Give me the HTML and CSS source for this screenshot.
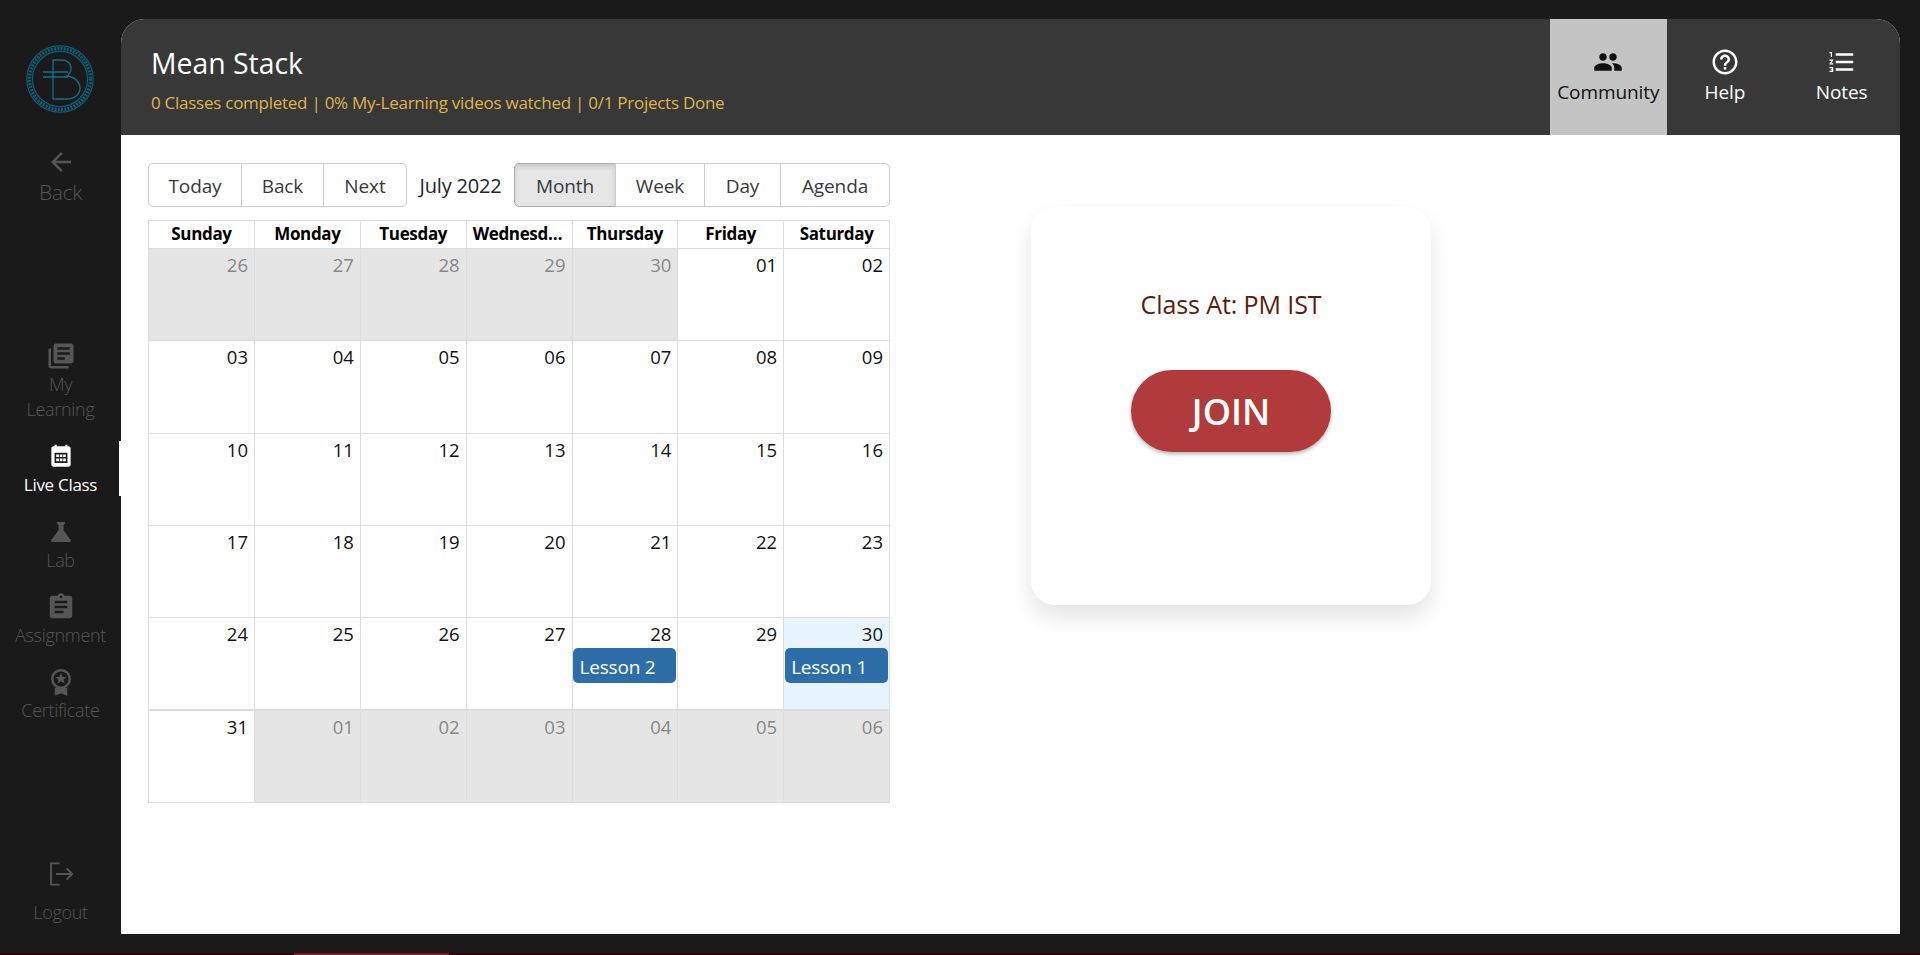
FILE: index.html
```html
<!DOCTYPE html>
<html lang="en">
<head>
  <meta charset="UTF-8" />
  <meta name="viewport" content="width=device-width, initial-scale=1.0" />
  <title>Mean Stack - Live Class</title>
  <link rel="stylesheet" href="styles.css">
</head>
<body>
  <div class="app">
    <aside class="sidebar">
      <svg class="logo" viewBox="0 0 68 68" fill="none" stroke="#0d5f78">
        <circle cx="34" cy="34" r="33.2" stroke-width="1.2" />
        <circle cx="34" cy="34" r="30.5" stroke-width="3.4" stroke-dasharray="2 1.2" />
        <circle cx="34" cy="34" r="27.6" stroke-width="1.2" />
        <path stroke="#11708c" stroke-width="1.3" d="M27 54V15h9c6 0 9 4 9 8.500 0 3-1.500 5.500-4 7.500 8 1 13 6.500 13 12 0 6-5 11-13 11H27" />
        <path stroke="#11708c" stroke-width="1.300" d="M17 27h25M17 32h25" />
      </svg>

      <a class="nav-item back">
        <svg viewBox="0 0 24 24"><path d="M20 11H7.830l5.590-5.590L12 4l-8 8 8 8 1.410-1.410L7.830 13H20v-2z" /></svg>
        <span>Back</span>
      </a>

      <nav class="nav-list">
        <a class="nav-item">
          <svg viewBox="0 0 24 24"><path d="M4 6H2v14c0 1.100.9 2 2 2h14v-2H4V6zm16-4H8c-1.100 0-2 .9-2 2v12c0 1.100.9 2 2 2h12c1.100 0 2-.9 2-2V4c0-1.100-.9-2-2-2zm-1 9H9V9h10v2zm-4 4H9v-2h6v2zm4-8H9V5h10v2z" /></svg>
          <span>My<br>Learning</span>
        </a>
        <a class="nav-item active">
          <svg viewBox="-2 -2 28 28">
            <path d="M19 3h-1V1.500h-2V3H8V1.500H6V3H5C3.900 3 3 3.900 3 5v15c0 1.100.9 2 2 2h14c1.100 0 2-.9 2-2V5c0-1.100-.9-2-2-2z" />
            <path class="cut" d="M6 9h12v9.500H6z" />
            <path d="M7.500 10.500h2.500V13H7.500zM10.800 10.500h2.500V13h-2.500zM14 10.500h2.500V13H14zM7.500 14.300h2.500v2.500H7.500zM10.800 14.300h2.500v2.500h-2.500zM14 14.300h2.500v2.500H14z" />
          </svg>
          <span>Live Class</span>
        </a>
        <a class="nav-item">
          <svg viewBox="0 0 24 24"><path d="M19.800 18.400L14 10.670V6.500l1.350-1.690c.26-.33.03-.81-.39-.81H9.040c-.42 0-.65.48-.39.81L10 6.500v4.170L4.200 18.400c-.49.66-.02 1.600.8 1.600h14c.82 0 1.290-.94.8-1.600z" /></svg>
          <span>Lab</span>
        </a>
        <a class="nav-item">
          <svg viewBox="0 0 24 24"><path d="M19 3h-4.180C14.400 1.840 13.300 1 12 1c-1.300 0-2.400.84-2.820 2H5c-1.100 0-2 .9-2 2v14c0 1.100.9 2 2 2h14c1.100 0 2-.9 2-2V5c0-1.100-.9-2-2-2zm-7 0c.55 0 1 .45 1 1s-.45 1-1 1-1-.45-1-1 .45-1 1-1zm2 14H7v-2h7v2zm3-4H7v-2h10v2zm0-4H7V7h10v2z" /></svg>
          <span>Assignment</span>
        </a>
        <a class="nav-item">
          <svg viewBox="0 0 24 24">
            <path d="M7 16.500V23l5-2 5 2v-6.500z" />
            <circle cx="12" cy="9.500" r="8" />
            <circle class="cut" cx="12" cy="9.500" r="6" />
            <path d="M12 5l1.300 3h3.200l-2.600 2 1 3.200-2.900-1.900-2.900 1.900 1-3.200-2.600-2h3.200z" />
          </svg>
          <span>Certificate</span>
        </a>
      </nav>

      <a class="nav-item logout">
        <svg viewBox="0 0 24 24" fill="none" stroke-width="1.500">
          <path class="line" d="M11 3.500H4v17h7M8 12h13M16.500 7.500L21 12l-4.500 4.500" />
        </svg>
        <span>Logout</span>
      </a>
    </aside>

    <main class="panel">
      <header class="panel-head">
        <div class="course">
          <h1>Mean Stack</h1>
          <p>0 Classes completed | 0% My-Learning videos watched | 0/1 Projects Done</p>
        </div>
        <div class="tabs">
          <a class="tab selected">
            <svg viewBox="0 0 24 24"><path d="M16 11c1.660 0 2.990-1.340 2.990-3S17.660 5 16 5c-1.660 0-3 1.340-3 3s1.340 3 3 3zm-8 0c1.660 0 2.990-1.340 2.990-3S9.660 5 8 5C6.340 5 5 6.340 5 8s1.340 3 3 3zm0 2c-2.330 0-7 1.170-7 3.500V19h14v-2.500c0-2.330-4.670-3.500-7-3.500zm8 0c-.29 0-.62.02-.97.05 1.160.84 1.970 1.970 1.970 3.450V19h6v-2.500c0-2.330-4.670-3.500-7-3.500z" /></svg>
            <span>Community</span>
          </a>
          <a class="tab">
            <svg viewBox="0 0 24 24"><path d="M11 18h2v-2h-2v2zm1-16C6.480 2 2 6.480 2 12s4.480 10 10 10 10-4.480 10-10S17.520 2 12 2zm0 18c-4.410 0-8-3.590-8-8s3.590-8 8-8 8 3.590 8 8-3.590 8-8 8zm0-14c-2.210 0-4 1.790-4 4h2c0-1.100.9-2 2-2s2 .9 2 2c0 2-3 1.750-3 5h2c0-2.250 3-2.500 3-5 0-2.210-1.790-4-4-4z" /></svg>
            <span>Help</span>
          </a>
          <a class="tab">
            <svg viewBox="0 0 24 24"><path d="M2 17h2v.5H3v1h1v.5H2v1h3v-4H2v1zm1-9h1V4H2v1h1v3zm-1 3h1.800L2 13.100v.9h3v-1H3.200L5 10.900V10H2v1zm5-6v2h14V5H7zm0 14h14v-2H7v2zm0-6h14v-2H7v2z" /></svg>
            <span>Notes</span>
          </a>
        </div>
      </header>

      <section class="panel-body">
        <div class="calendar">
          <div class="toolbar">
            <div class="btn-group">
              <button class="w-today">Today</button>
              <button class="w-back">Back</button>
              <button class="w-next">Next</button>
            </div>
            <span class="toolbar-label">July 2022</span>
            <div class="btn-group">
              <button class="w-month on">Month</button>
              <button class="w-week">Week</button>
              <button class="w-day">Day</button>
              <button class="w-agenda">Agenda</button>
            </div>
          </div>

          <div class="grid">
            <div class="head">
              <div>Sunday</div><div>Monday</div><div>Tuesday</div><div>Wednesday</div><div>Thursday</div><div>Friday</div><div>Saturday</div>
            </div>
            <div class="week">
              <div class="off">26</div><div class="off">27</div><div class="off">28</div><div class="off">29</div><div class="off">30</div><div>01</div><div>02</div>
            </div>
            <div class="week">
              <div>03</div><div>04</div><div>05</div><div>06</div><div>07</div><div>08</div><div>09</div>
            </div>
            <div class="week">
              <div>10</div><div>11</div><div>12</div><div>13</div><div>14</div><div>15</div><div>16</div>
            </div>
            <div class="week">
              <div>17</div><div>18</div><div>19</div><div>20</div><div>21</div><div>22</div><div>23</div>
            </div>
            <div class="week">
              <div>24</div><div>25</div><div>26</div><div>27</div>
              <div>28<span class="event">Lesson 2</span></div>
              <div>29</div>
              <div class="today">30<span class="event">Lesson 1</span></div>
            </div>
            <div class="week last">
              <div>31</div><div class="off">01</div><div class="off">02</div><div class="off">03</div><div class="off">04</div><div class="off">05</div><div class="off">06</div>
            </div>
          </div>
        </div>

        <div class="join-card">
          <p>Class At: PM IST</p>
          <button class="join">JOIN</button>
        </div>
      </section>
    </main>
  </div>

  <div class="stripe"><i></i></div>
</body>
</html>
```

FILE: styles.css
```css
* {
  box-sizing: border-box;
}
html, body {
  height: 100%;
}
body {
  margin: 0;
  display: flex;
  flex-direction: column;
  overflow: hidden;
  background: #1a1a1a;
  font-family: 'Open Sans', 'Noto Sans', sans-serif;
  color: #212529;
}
a {
  color: inherit;
}
svg {
  display: block;
  fill: currentColor;
}
.app {
  flex: 1;
  display: flex;
  min-height: 0;
}
.stripe {
  height: 2px;
  padding-left: 294px;
  background: #2a0808;
}
.stripe i {
  display: block;
  width: 155px;
  height: 2px;
  background: #7c1a1a;
}

/* sidebar */
.sidebar {
  width: 121px;
  flex-shrink: 0;
  display: flex;
  flex-direction: column;
  align-items: stretch;
  padding-top: 45px;
  padding-bottom: 28px;
}
.logo {
  width: 68px;
  height: 68px;
  margin: 0 auto 34px 26px;
  fill: none;
}
.nav-item {
  position: relative;
  display: flex;
  flex-direction: column;
  align-items: center;
  gap: 1px;
  color: #565656;
  font-size: 18px;
  font-weight: 300;
  line-height: 25px;
  letter-spacing: -0.3px;
  text-align: center;
}
.nav-item svg {
  width: 30px;
  height: 30px;
}
.nav-list {
  display: flex;
  flex-direction: column;
  gap: 19px;
  margin-top: 136px;
}
.back {
  gap: 3px;
  font-size: 21px;
}
.nav-item.active {
  padding-bottom: 1px;
  color: #fff;
  font-size: 17px;
  font-weight: 400;
}
.nav-item.active::after {
  content: "";
  position: absolute;
  top: 0;
  right: 0;
  width: 2px;
  height: 55px;
  background: #fff;
}
.cut {
  fill: #1a1a1a;
}
.line {
  stroke: currentColor;
  fill: none;
}
.logout {
  margin-top: auto;
  gap: 11px;
}

/* main panel */
.panel {
  flex: 1;
  display: flex;
  flex-direction: column;
  margin: 19px 20px 19px 0;
  background: #fff;
  border-radius: 24px 24px 0 0;
  overflow: hidden;
}
.panel-head {
  height: 116px;
  flex-shrink: 0;
  display: flex;
  justify-content: space-between;
  background: #383838;
}
.course {
  padding: 23px 0 0 30px;
}
.course h1 {
  margin: 0;
  color: #fff;
  font-size: 28.4px;
  font-weight: 400;
  line-height: 42px;
}
.course p {
  margin: 0;
  color: #dcb54a;
  font-size: 17px;
  line-height: 38px;
  letter-spacing: -0.26px;
}
.tabs {
  display: flex;
}
.tab {
  width: 116.7px;
  display: flex;
  flex-direction: column;
  align-items: center;
  padding-top: 28px;
  color: #fff;
  font-size: 19px;
  line-height: 31px;
  letter-spacing: -0.1px;
}
.tab svg {
  width: 30px;
  height: 30px;
}
.tab.selected {
  background: #c4c4c4;
  color: #111;
}

/* calendar */
.panel-body {
  flex: 1;
  display: flex;
  align-items: flex-start;
  padding: 28px 0 0 27px;
}
.calendar {
  width: 742px;
}
.toolbar {
  display: flex;
  align-items: center;
  height: 44px;
  margin-bottom: 13px;
}
.toolbar-label {
  flex: 1;
  text-align: center;
  font-size: 20px;
  letter-spacing: -0.2px;
}
.btn-group {
  display: flex;
  height: 44px;
}
.btn-group button {
  margin: 0;
  padding: 2px 0 0;
  background: #fff;
  border: 1px solid #ccc;
  margin-left: -1px;
  color: #373a3c;
  font-family: inherit;
  font-size: 19px;
  font-weight: 400;
  letter-spacing: -0.1px;
}
.btn-group button:first-child {
  margin-left: 0;
  border-radius: 5px 0 0 5px;
}
.btn-group button:last-child {
  border-radius: 0 5px 5px 0;
}
.btn-group button.on {
  background: #e6e6e6;
  border-color: #adadad;
  box-shadow: inset 0 3px 5px rgba(0, 0, 0, 0.125);
}
.w-today { width: 94px; }
.w-back { width: 83px; }
.w-next { width: 84px; }
.w-month { width: 102px; }
.w-week { width: 90px; }
.w-day { width: 77px; }
.w-agenda { width: 110px; }

.grid {
  border: 1px solid #ddd;
  border-bottom: 0;
}
.head, .week {
  display: grid;
  grid-template-columns: 105px repeat(6, 1fr);
}
.head {
  height: 28px;
  border-bottom: 1px solid #ddd;
  color: #000;
  font-size: 17px;
  font-weight: 700;
  line-height: 26px;
  letter-spacing: -0.35px;
  text-align: center;
}
.head div {
  padding: 0 6px;
  overflow: hidden;
  white-space: nowrap;
  text-overflow: ellipsis;
  border-left: 1px solid #ddd;
}
.head div:first-child {
  border-left: 0;
}
.week {
  height: 92.3px;
  border-bottom: 1px solid #ddd;
}
.week.last {
  border-top: 1px solid #ddd;
}
.week > div {
  padding: 3px 6px 0 0;
  border-left: 1px solid #ddd;
  color: #111;
  font-size: 18.5px;
  line-height: 25px;
  text-align: right;
}
.week > div:first-child {
  border-left: 0;
}
.week > div.off {
  background: #e5e5e5;
  color: #888;
}
.week > div.today {
  background: #e8f4fd;
}
.event {
  display: block;
  height: 35px;
  margin: 2px -5px 0 0;
  padding-left: 7px;
  background: #2d6ea8;
  border-radius: 5px;
  color: #fff;
  font-size: 19px;
  line-height: 38px;
  letter-spacing: -0.2px;
  text-align: left;
}
.today .event {
  margin-left: 1px;
  padding-left: 6px;
}

/* join card */
.join-card {
  width: 400px;
  height: 398px;
  margin: 44px 0 0 141px;
  padding-top: 78px;
  background: #fff;
  border-radius: 24px;
  box-shadow: 0 12px 22px rgba(0, 0, 0, 0.11);
  text-align: center;
}
.join-card p {
  margin: 0 0 47px;
  color: #5e1a10;
  font-size: 25px;
  font-weight: 500;
  line-height: 38px;
  letter-spacing: -0.1px;
}
.join {
  width: 200px;
  height: 82px;
  padding: 0;
  background: #b03a3c;
  border: 0;
  border-radius: 41px;
  box-shadow: 0 2px 4px rgba(0, 0, 0, 0.3);
  color: #fff;
  font-family: inherit;
  font-size: 36px;
  font-weight: 600;
}
```
